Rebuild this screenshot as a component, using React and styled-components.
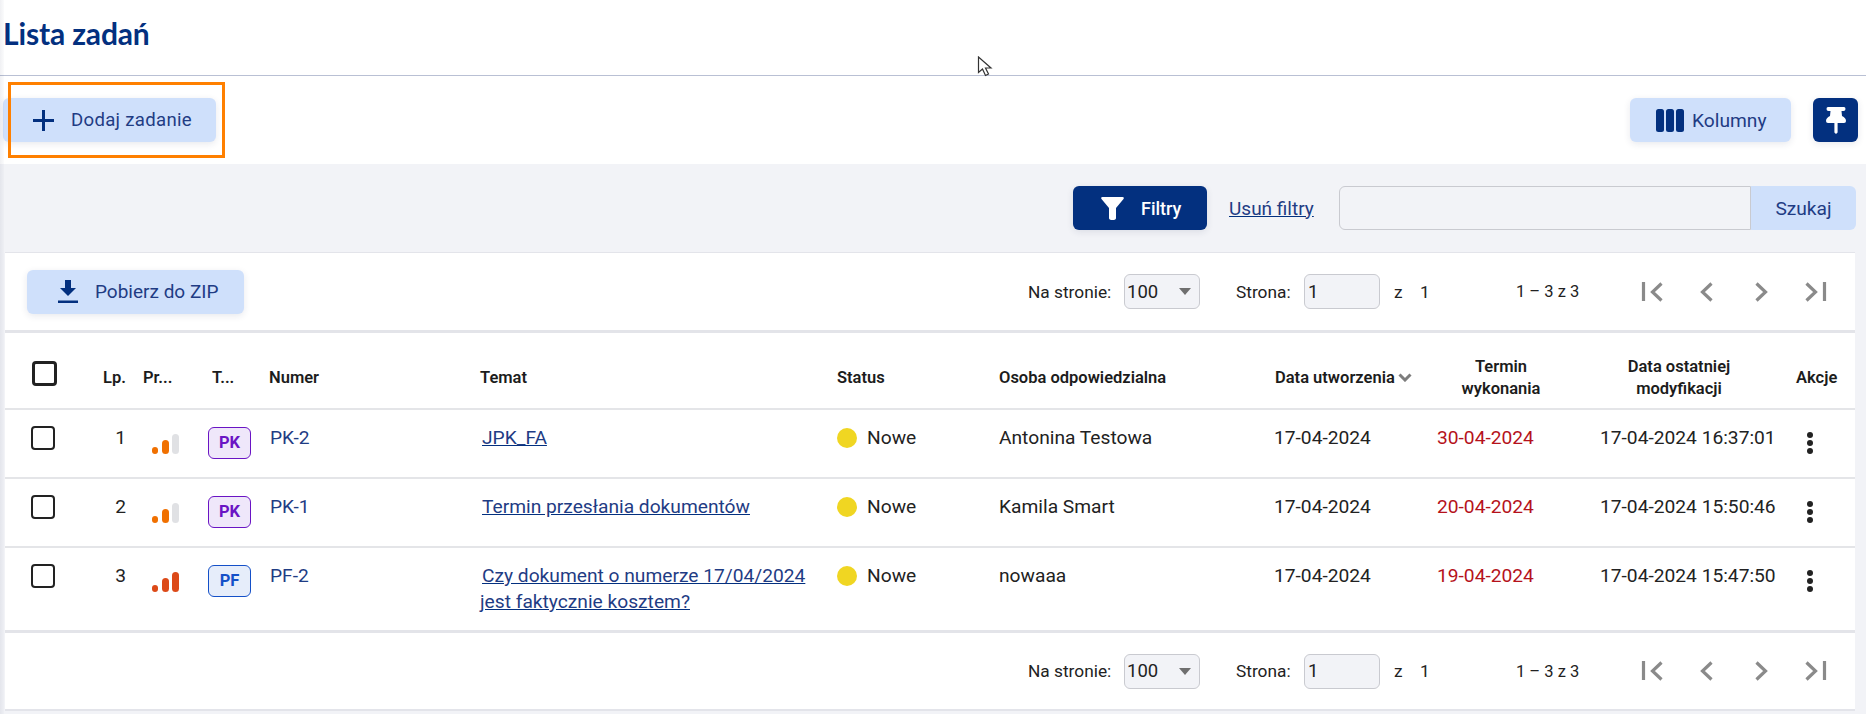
import React from "react";
import styled, { createGlobalStyle } from "styled-components";

const Global = createGlobalStyle`
  html, body { margin: 0; padding: 0; background: #f2f3f7; overflow: hidden; }
  body { font-family: "Roboto", "Liberation Sans", sans-serif; color: #222; }
  * { box-sizing: border-box; }
`;

const NAVY = "#03307f";
const LINK = "#1f3c84";
const SOFT = "#cfe0fb";
const BAND = "#f2f3f7";

const Page = styled.div`
  position: relative;
  width: 1866px;
  min-height: 714px;
  background: ${BAND};
  &::before {
    content: "";
    position: absolute;
    left: 0; top: 0; bottom: 0;
    width: 4px;
    background: linear-gradient(90deg, rgba(40, 50, 90, 0.07), rgba(40, 50, 90, 0.02));
    pointer-events: none;
    z-index: 2;
  }
`;
const TitleBar = styled.header`
  height: 76px;
  background: #fff;
  border-bottom: 1px solid #b9c0d4;
  padding: 14px 0 0 3px;
`;
const Title = styled.h1`
  margin: 0;
  font: 700 30px/38px "Lato", "Noto Sans", sans-serif;
  letter-spacing: -0.15px;
  color: ${NAVY};
`;
const ActionBar = styled.div`
  position: relative;
  height: 88px;
  background: #fff;
  display: flex;
  align-items: center;
  padding: 0 8px 0 3px;
`;
const Highlight = styled.div`
  position: absolute;
  left: 8px; top: 6px;
  width: 217px; height: 76px;
  border: 3px solid #ff8000;
  pointer-events: none;
`;
const Btn = styled.button`
  height: 44px;
  width: ${p => p.$w}px;
  border: 0;
  border-radius: 6px;
  background: ${p => (p.$primary ? NAVY : SOFT)};
  color: ${p => (p.$primary ? "#fff" : LINK)};
  box-shadow: 0 2px 7px rgba(30, 40, 80, 0.1);
  display: flex;
  align-items: center;
  padding: 0 0 0 ${p => p.$pad || 0}px;
  gap: ${p => p.$gap || 0}px;
  font-family: "Roboto", sans-serif;
  font-size: ${p => p.$size || 18}px;
  font-weight: ${p => (p.$primary ? 500 : 400)};
  letter-spacing: ${p => p.$ls || 0}px;
  white-space: nowrap;
  flex: none;
`;
const Spacer = styled.div` flex: 1; `;
const PinBtn = styled(Btn)`
  justify-content: center;
  margin-left: 22px;
`;
const FilterBar = styled.div`
  height: 88px;
  display: flex;
  align-items: center;
  justify-content: flex-end;
  padding-right: 10px;
`;
const ClearLink = styled.a`
  margin-left: 22px;
  width: 110px;
  font-size: 19px;
  color: ${LINK};
  text-decoration: underline;
  text-decoration-color: ${NAVY};
`;
const SearchInput = styled.input`
  width: 412px;
  height: 44px;
  border: 1px solid #c9cad0;
  border-radius: 6px 0 0 6px;
  background: ${BAND};
  outline: none;
`;
const SearchBtn = styled.button`
  width: 105px;
  height: 44px;
  border: 0;
  border-radius: 0 6px 6px 0;
  background: ${SOFT};
  color: ${LINK};
  font: 400 19.2px "Roboto", sans-serif;
`;
const Card = styled.section`
  margin: 0 11px 0 5px;
  background: #fff;
  border-top: 1px solid #e3e4ea;
  border-bottom: 2px solid #e3e4ea;
`;
const PagerRow = styled.div`
  height: ${p => p.$h}px;
  display: flex;
  align-items: center;
  padding-left: 22px;
  border-bottom: ${p => (p.$line ? "3px solid #e3e4e9" : "0")};
  border-top: ${p => (p.$topLine ? "3px solid #e3e4e9" : "0")};
`;
const PagerGrid = styled.div`
  margin-left: auto;
  margin-right: 28px;
  display: grid;
  grid-template-columns: 96px 76px 104px 76px 40px 96px 125px 186px;
  align-items: center;
  color: #222;
`;
const PagerLabel = styled.span`
  padding-left: ${p => p.$pad || 0}px;
  font-size: ${p => p.$size || 17.3}px;
  white-space: nowrap;
`;
const SelectBox = styled.div`
  height: 35px;
  background: ${BAND};
  border: 1px solid #c9cad0;
  border-radius: 6px;
  display: flex;
  align-items: center;
  justify-content: space-between;
  padding: 0 8px 0 2px;
  font-size: 18.5px;
`;
const PageInput = styled.input`
  width: 76px;
  height: 35px;
  background: ${BAND};
  border: 1px solid #c9cad0;
  border-radius: 6px;
  padding: 0 0 0 3px;
  font: 400 18.5px "Roboto", sans-serif;
  color: #222;
  outline: none;
`;
const PagerIcons = styled.div`
  display: flex;
  justify-content: space-between;
  align-items: center;
`;
const Table = styled.table`
  width: 1850px;
  table-layout: fixed;
  border-collapse: separate;
  border-spacing: 0;
`;
const Th = styled.th`
  height: 77px;
  padding: 14px 0 0 ${p => p.$pl || 0}px;
  padding-right: ${p => p.$pr || 0}px;
  text-align: ${p => p.$align || "left"};
  vertical-align: middle;
  font-size: 16.5px;
  line-height: 22px;
  font-weight: 600;
  color: #1c1c1c;
  border-bottom: 2px solid #e4e5e8;
  white-space: nowrap;
`;
const Td = styled.td`
  height: ${p => p.$h || 69}px;
  vertical-align: top;
  padding: 15px ${p => p.$pr || 0}px 0 ${p => p.$pl || 0}px;
  text-align: ${p => p.$align || "left"};
  font-size: 19.2px;
  line-height: 26px;
  color: ${p => p.$color || "#222"};
  border-bottom: ${p => (p.$last ? "0" : "2px solid #e4e5e8")};
  white-space: ${p => (p.$wrap ? "normal" : "nowrap")};
`;
const Check = styled.input.attrs({ type: "checkbox" })`
  appearance: none;
  display: block;
  margin: ${p => (p.$head ? "0 0 8px 27px" : "1px 0 0 26px")};
  width: ${p => (p.$head ? 25 : 24)}px;
  height: ${p => (p.$head ? 25 : 24)}px;
  border: ${p => (p.$head ? "3px" : "2.4px")} solid #222;
  border-radius: 4px;
  background: #fff;
`;
const Bars = styled.svg`
  display: block;
  margin: 9px 0 0 9px;
`;
const Badge = styled.span`
  display: flex;
  align-items: center;
  justify-content: center;
  width: 43px;
  height: 32px;
  margin-top: 2px;
  border-radius: 6px;
  border: 1.5px solid ${p => p.$c};
  background: ${p => p.$bg};
  color: ${p => p.$c};
  font-size: 16.5px;
  font-weight: 700;
  line-height: 1;
`;
const TaskLink = styled.a`
  color: ${LINK};
  text-decoration: underline;
  text-decoration-color: ${NAVY};
  text-indent: 2px;
  display: block;
`;
const StatusWrap = styled.div`
  display: flex;
  align-items: center;
  gap: 10px;
`;
const Dot = styled.span`
  width: 20px;
  height: 20px;
  border-radius: 50%;
  background: #f0d622;
  flex: none;
`;
const SortHead = styled.span`
  display: inline-flex;
  align-items: center;
  gap: 3px;
`;
const Kebab = styled.svg`
  display: block;
  margin: 7px 0 0 31px;
`;
const Cursor = styled.svg`
  position: absolute;
  left: 977px;
  top: 56px;
  z-index: 3;
`;

const ChevFirst = () => (
  <svg width="22" height="22" viewBox="0 0 22 22">
    <path d="M2.5 1V20M20.5 2.5L11.5 11L20.5 19.5" fill="none" stroke="#8a8a8a" strokeWidth="3.2" />
  </svg>
);
const ChevPrev = () => (
  <svg width="22" height="22" viewBox="0 0 22 22">
    <path d="M15.5 2.5L6.5 11L15.5 19.5" fill="none" stroke="#8a8a8a" strokeWidth="3.2" />
  </svg>
);
const ChevNext = () => (
  <svg width="22" height="22" viewBox="0 0 22 22">
    <path d="M6.5 2.5L15.5 11L6.5 19.5" fill="none" stroke="#8a8a8a" strokeWidth="3.2" />
  </svg>
);
const ChevLast = () => (
  <svg width="22" height="22" viewBox="0 0 22 22">
    <path d="M19.5 1V20M1.5 2.5L10.5 11L1.5 19.5" fill="none" stroke="#8a8a8a" strokeWidth="3.2" />
  </svg>
);

const Pager = () => (
  <PagerGrid>
    <PagerLabel>Na stronie:</PagerLabel>
    <SelectBox>
      100
      <svg width="12" height="7" viewBox="0 0 12 7"><path d="M0 0H12L6 7Z" fill="#6f6f6f" /></svg>
    </SelectBox>
    <PagerLabel $pad={36}>Strona:</PagerLabel>
    <PageInput defaultValue="1" readOnly />
    <PagerLabel $pad={14}>z</PagerLabel>
    <PagerLabel>1</PagerLabel>
    <PagerLabel $size={16.5}>1 – 3 z 3</PagerLabel>
    <PagerIcons>
      <ChevFirst /><ChevPrev /><ChevNext /><ChevLast />
    </PagerIcons>
  </PagerGrid>
);

const Priority = ({ color, third }) => (
  <Bars width="27" height="20" viewBox="0 0 27 20">
    <rect x="0" y="13" width="6" height="7" rx="3" fill={color} />
    <rect x="10" y="6" width="7" height="14" rx="3.5" fill={color} />
    <rect x="20" y="0" width="7" height="20" rx="3.5" fill={third} />
  </Bars>
);

const rows = [
  { n: 1, c: "#f07000", t: "#e0e1e4", type: "PK", num: "PK-2", title: "JPK_FA", person: "Antonina Testowa", due: "30-04-2024", mod: "17-04-2024 16:37:01" },
  { n: 2, c: "#f07000", t: "#e0e1e4", type: "PK", num: "PK-1", title: "Termin przesłania dokumentów", person: "Kamila Smart", due: "20-04-2024", mod: "17-04-2024 15:50:46" },
  { n: 3, c: "#dc4a18", t: "#dc4a18", type: "PF", num: "PF-2", title: "Czy dokument o numerze 17/04/2024 jest faktycznie kosztem?", person: "nowaaa", due: "19-04-2024", mod: "17-04-2024 15:47:50" },
];
const badgeTheme = {
  PK: { c: "#6a14c4", bg: "#efe7fa" },
  PF: { c: "#1450c8", bg: "#e6edfa" },
};

export default function App() {
  return (
    <Page>
      <Global />
      <Cursor width="16" height="21" viewBox="0 0 16 21">
        <path d="M1.5 1V16.5L5.5 13L8.5 19.5L11.5 18L8.5 12H14Z" fill="#fff" stroke="#333" strokeWidth="1.2" />
      </Cursor>
      <TitleBar><Title>Lista zadań</Title></TitleBar>
      <ActionBar>
        <Btn $w={213} $pad={30} $gap={17} $size={18.6} $ls={0.3}>
          <svg width="21" height="21" viewBox="0 0 21 21"><path d="M10.5 0V21M0 10.5H21" stroke={NAVY} strokeWidth="3" /></svg>
          Dodaj zadanie
        </Btn>
        <Highlight />
        <Spacer />
        <Btn $w={161} $pad={26} $gap={8} $size={19.2}>
          <svg width="28" height="23" viewBox="0 0 28 23">
            <rect x="0" y="0" width="8" height="23" rx="2.5" fill={NAVY} />
            <rect x="10" y="0" width="8" height="23" rx="2.5" fill={NAVY} />
            <rect x="20" y="0" width="8" height="23" rx="2.5" fill={NAVY} />
          </svg>
          Kolumny
        </Btn>
        <PinBtn as="button" $w={45} $primary>
          <svg width="20" height="27" viewBox="0 0 20 27">
            <path d="M2 0H18Q19.5 0 19.5 2Q19.5 4 17.5 4H15.5L16 9Q20 11 20 14Q20 16 18 16H11.6V25.5L10 27L8.4 25.5V16H2Q0 16 0 14Q0 11 4 9L4.5 4H2.5Q.5 4 .5 2Q.5 0 2 0Z" fill="#fff" />
          </svg>
        </PinBtn>
      </ActionBar>
      <FilterBar>
        <Btn $w={134} $pad={28} $gap={17} $size={18} $primary>
          <svg width="23" height="23" viewBox="0 0 23 23">
            <path d="M1.5 0H21.5Q23.5 0 22.5 2L15 11V21Q15 23 11.5 23Q8 23 8 21V11L0.5 2Q-.5 0 1.5 0Z" fill="#fff" />
          </svg>
          Filtry
        </Btn>
        <ClearLink href="#">Usuń filtry</ClearLink>
        <SearchInput />
        <SearchBtn>Szukaj</SearchBtn>
      </FilterBar>
      <Card>
        <PagerRow $h={80} $line>
          <Btn $w={217} $pad={31} $gap={17} $size={19}>
            <svg width="20" height="23" viewBox="0 0 20 23">
              <path d="M7 0H13V8H18L10 16L2 8H7Z M0 20.5H20V23H0Z" fill={NAVY} />
            </svg>
            Pobierz do ZIP
          </Btn>
          <Pager />
        </PagerRow>
        <Table>
          <colgroup>
            {[95, 43, 65, 61, 211, 356, 163, 275, 146, 162, 194, 79].map((w, i) => (
              <col key={i} style={{ width: w }} />
            ))}
          </colgroup>
          <thead>
            <tr>
              <Th><Check $head /></Th>
              <Th $align="right" $pr={17}>Lp.</Th>
              <Th>Pr...</Th>
              <Th $pl={4}>T...</Th>
              <Th>Numer</Th>
              <Th>Temat</Th>
              <Th $pl={1}>Status</Th>
              <Th>Osoba odpowiedzialna</Th>
              <Th $pl={1}>
                <SortHead>
                  Data utworzenia
                  <svg width="14" height="9" viewBox="0 0 14 9"><path d="M1.5 1.5L7 7L12.5 1.5" fill="none" stroke="#7d7d7d" strokeWidth="3" /></svg>
                </SortHead>
              </Th>
              <Th $align="center">Termin<br />wykonania</Th>
              <Th $align="center">Data ostatniej<br />modyfikacji</Th>
              <Th $pl={20}>Akcje</Th>
            </tr>
          </thead>
          <tbody>
            {rows.map((r, i) => {
              const last = i === rows.length - 1;
              const h = last ? 82 : 69;
              return (
                <tr key={r.n}>
                  <Td $h={h} $last={last}><Check /></Td>
                  <Td $h={h} $last={last} $align="right" $pr={17}>{r.n}</Td>
                  <Td $h={h} $last={last}><Priority color={r.c} third={r.t} /></Td>
                  <Td $h={h} $last={last}><Badge {...{ $c: badgeTheme[r.type].c, $bg: badgeTheme[r.type].bg }}>{r.type}</Badge></Td>
                  <Td $h={h} $last={last} $pl={1} $color={LINK}>{r.num}</Td>
                  <Td $h={h} $last={last} $wrap $pr={20}><TaskLink href="#">{r.title}</TaskLink></Td>
                  <Td $h={h} $last={last} $pl={1}><StatusWrap><Dot />Nowe</StatusWrap></Td>
                  <Td $h={h} $last={last}>{r.person}</Td>
                  <Td $h={h} $last={last}>17-04-2024</Td>
                  <Td $h={h} $last={last} $pl={17} $color="#b5121b">{r.due}</Td>
                  <Td $h={h} $last={last} $pl={18}>{r.mod}</Td>
                  <Td $h={h} $last={last}>
                    <Kebab width="6" height="22" viewBox="0 0 6 22">
                      <circle cx="3" cy="3" r="3" fill="#222" />
                      <circle cx="3" cy="11" r="3" fill="#222" />
                      <circle cx="3" cy="19" r="3" fill="#222" />
                    </Kebab>
                  </Td>
                </tr>
              );
            })}
          </tbody>
        </Table>
        <PagerRow $h={79} $topLine>
          <Pager />
        </PagerRow>
      </Card>
    </Page>
  );
}
